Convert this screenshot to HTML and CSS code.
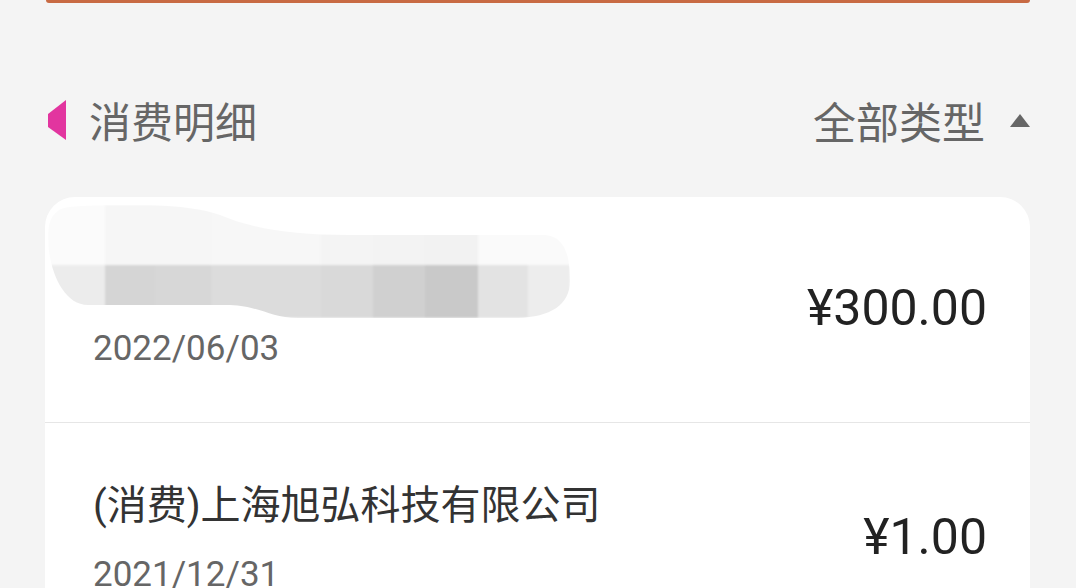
FILE: index.html
```html
<!DOCTYPE html>
<html lang="zh-CN">
<head>
<meta charset="utf-8">
<title>消费明细</title>
<link rel="stylesheet" href="styles.css">
</head>
<body>
<div class="topbar"></div>
<div class="section-header">
  <div class="title-wrap">
    <svg class="marker" width="18" height="40" viewBox="0 0 18 40"><polygon points="18,0 18,40 0,27 0,14" fill="#e2359f"/></svg>
    <span class="title">消费明细</span>
  </div>
  <div class="filter">
    <span class="filter-text">全部类型</span>
    <svg class="caret" width="20" height="13" viewBox="0 0 20 13"><polygon points="10,0 20,13 0,13" fill="#666"/></svg>
  </div>
</div>
<div class="card">
  <div class="row row-first">
    <div class="row-left">
      <svg class="redact" width="522" height="113" viewBox="0 0 522 113">
        <defs>
          <clipPath id="blob">
            <path d="M22 2 C70 -2 140 -2 172 10 C205 24 245 30 300 30 L495 30 C520 30 522 58 522 76 C522 100 502 112 470 113 L250 113 C222 113 212 101 182 100 L40 100 C14 100 0 62 0 32 C0 12 8 3 22 2 Z"/>
          </clipPath>
          <filter id="soft"><feGaussianBlur stdDeviation="1.2"/></filter>
        </defs>
        <g clip-path="url(#blob)" filter="url(#soft)">
          <rect x="0" y="0" width="57" height="60" fill="#fbfbfb"/>
          <rect x="57" y="0" width="106" height="60" fill="#f6f6f6"/>
          <rect x="163" y="0" width="110" height="60" fill="#f7f7f7"/>
          <rect x="273" y="0" width="52" height="60" fill="#f4f4f4"/>
          <rect x="325" y="0" width="52" height="60" fill="#f3f3f3"/>
          <rect x="377" y="0" width="53" height="60" fill="#f2f2f2"/>
          <rect x="430" y="0" width="92" height="60" fill="#fafafa"/>
          <rect x="0" y="60" width="57" height="53" fill="#ececec"/>
          <rect x="57" y="60" width="50" height="53" fill="#d5d5d5"/>
          <rect x="107" y="60" width="56" height="53" fill="#d7d7d7"/>
          <rect x="163" y="60" width="110" height="53" fill="#dcdcdc"/>
          <rect x="273" y="60" width="52" height="53" fill="#d9d9d9"/>
          <rect x="325" y="60" width="52" height="53" fill="#d0d0d0"/>
          <rect x="377" y="60" width="53" height="53" fill="#c9c9c9"/>
          <rect x="430" y="60" width="50" height="53" fill="#e3e3e3"/>
          <rect x="480" y="60" width="42" height="53" fill="#ededed"/>
        </g>
      </svg>
      <div class="date date-first">2022/06/03</div>
    </div>
    <div class="amount">¥300.00</div>
  </div>
  <div class="row row-second">
    <div class="row-left">
      <div class="name">(消费)上海旭弘科技有限公司</div>
      <div class="date">2021/12/31</div>
    </div>
    <div class="amount amount-second">¥1.00</div>
  </div>
</div>
</body>
</html>
```
FILE: styles.css
```css
html, body {
  margin: 0;
  padding: 0;
}
body {
  background: #f4f4f4;
  width: 1076px;
  height: 588px;
  overflow: hidden;
  font-family: Roboto, "Noto Sans CJK SC", sans-serif;
}
.topbar {
  height: 3px;
  margin: 0 46px 0 46px;
  background: #c86a43;
  border-radius: 0 0 10px 10px;
}
.section-header {
  display: flex;
  justify-content: space-between;
  align-items: center;
  height: 42px;
  margin-top: 96px;
  padding: 0 46px 0 48px;
}
.title-wrap {
  display: flex;
  align-items: center;
}
.marker {
  display: block;
  margin-right: 23px;
}
.title, .filter-text {
  font-family: "Noto Sans CJK SC", sans-serif;
  font-size: 42px;
  line-height: 42px;
  color: #666;
}
.filter-text {
  font-size: 43px;
}
.filter {
  display: flex;
  align-items: center;
}
.caret {
  display: block;
  margin-left: 25px;
}
.card {
  margin: 56px 46px 0 45px;
  background: #fff;
  border-radius: 30px;
  overflow: hidden;
}
.row {
  display: flex;
  justify-content: space-between;
  padding: 0 43px 0 48px;
}
.row-first {
  height: 225px;
  border-bottom: 1px solid #e6e6e6;
  padding-left: 3px;
  align-items: flex-start;
}
.row-first .row-left {
  padding-top: 8px;
}
.redact {
  display: block;
}
.date-first {
  margin-left: 45px;
  margin-top: 11px;
}
.row-second {
  height: 200px;
  align-items: flex-start;
}
.row-second .row-left {
  padding-top: 59px;
}
.name {
  font-family: Roboto, "Noto Sans CJK SC", sans-serif;
  font-size: 40px;
  line-height: 48px;
  color: #333;
}
.date {
  font-size: 35px;
  line-height: 40px;
  color: #666;
}
.row-second .date {
  margin-top: 25px;
}
.amount {
  font-size: 50px;
  line-height: 56px;
  color: #222;
  margin-top: 83px;
}
.amount-second {
  margin-top: 86px;
}
```
